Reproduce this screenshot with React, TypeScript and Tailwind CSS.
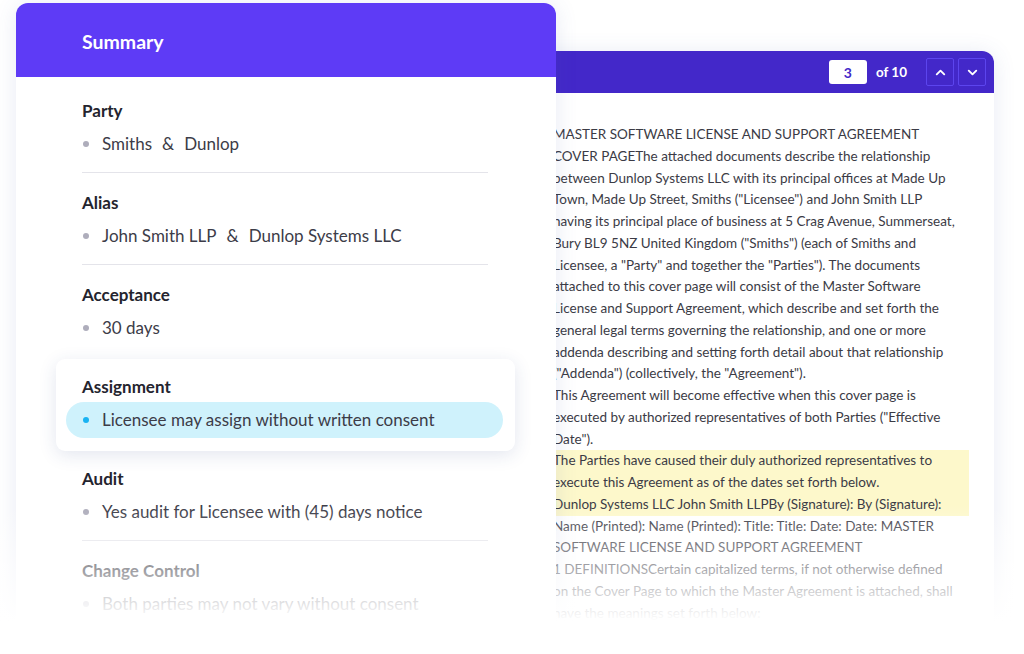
import React from "react";
import { ChevronUp, ChevronDown } from "lucide-react";

const docLines: { text: string; hl?: boolean }[] = [
  { text: "MASTER SOFTWARE LICENSE AND SUPPORT AGREEMENT" },
  { text: "COVER PAGEThe attached documents describe the relationship" },
  { text: "between Dunlop Systems LLC with its principal offices at Made Up" },
  { text: 'Town, Made Up Street, Smiths ("Licensee") and John Smith LLP' },
  { text: "having its principal place of business at 5 Crag Avenue, Summerseat," },
  { text: 'Bury BL9 5NZ United Kingdom ("Smiths") (each of Smiths and' },
  { text: 'Licensee, a "Party" and together the "Parties"). The documents' },
  { text: "attached to this cover page will consist of the Master Software" },
  { text: "License and Support Agreement, which describe and set forth the" },
  { text: "general legal terms governing the relationship, and one or more" },
  { text: "addenda describing and setting forth detail about that relationship" },
  { text: '("Addenda") (collectively, the "Agreement").' },
  { text: "This Agreement will become effective when this cover page is" },
  { text: 'executed by authorized representatives of both Parties ("Effective' },
  { text: 'Date").' },
  { text: "The Parties have caused their duly authorized representatives to", hl: true },
  { text: "execute this Agreement as of the dates set forth below.", hl: true },
  { text: "Dunlop Systems LLC John Smith LLPBy (Signature): By (Signature):", hl: true },
  { text: "Name (Printed): Name (Printed): Title: Title: Date: Date: MASTER" },
  { text: "SOFTWARE LICENSE AND SUPPORT AGREEMENT" },
  { text: "1 DEFINITIONSCertain capitalized terms, if not otherwise defined" },
  { text: "on the Cover Page to which the Master Agreement is attached, shall" },
  { text: "have the meanings set forth below:" },
];

function Item({ children, active }: { children: React.ReactNode; active?: boolean }) {
  return (
    <div className="flex items-center gap-[13px]">
      <span
        className={
          active
            ? "ml-[1px] h-[6px] w-[6px] rounded-full bg-[#19b3f2]"
            : "ml-[1px] h-[6px] w-[6px] rounded-full bg-[#aeadbb]"
        }
      />
      <span className="text-[17px] leading-[24px] text-[#3c3c48]">{children}</span>
    </div>
  );
}

function Amp() {
  return <span className="mx-[10px]">&amp;</span>;
}

function Section({
  title,
  children,
  divider = true,
}: {
  title: string;
  children: React.ReactNode;
  divider?: boolean;
}) {
  return (
    <div className="w-[406px]">
      <div className="text-[17px] font-bold leading-[24px] text-[#24242e]">{title}</div>
      <div className="mt-[9px]">{children}</div>
      {divider && <div className="mt-[16px] mb-[18px] h-px bg-[#e4e4ea]" />}
    </div>
  );
}

export default function App() {
  return (
    <div className="relative h-[654px] w-[1024px] overflow-hidden bg-white font-['Lato','Open_Sans',sans-serif]">
      <div className="flex items-start pl-4 pt-[3px]">
        {/* Summary panel */}
        <section className="relative z-10 h-[640px] w-[540px] shrink-0 rounded-t-[12px] bg-white shadow-[0_2px_22px_rgba(70,90,170,0.13)]">
          <header className="flex h-[74px] items-center rounded-t-[12px] bg-[#5e3bf6] pl-[66px] pt-[4px]">
            <h1 className="text-[19.5px] font-bold text-white">Summary</h1>
          </header>
          <div className="pl-[66px] pt-[22px]">
            <Section title="Party">
              <Item>
                Smiths<Amp />Dunlop
              </Item>
            </Section>
            <Section title="Alias">
              <Item>
                John Smith LLP<Amp />Dunlop Systems LLC
              </Item>
            </Section>
            <Section title="Acceptance" divider={false}>
              <Item>30 days</Item>
            </Section>
            <div className="-ml-[26px] mt-[19px] mb-[16px] w-[459px] rounded-[9px] bg-white pt-[16px] pb-[13px] pl-[26px] shadow-[0_4px_18px_rgba(40,60,130,0.13)]">
              <div className="text-[17px] font-bold leading-[24px] text-[#24242e]">Assignment</div>
              <div className="-ml-[16px] mt-[3px] flex h-[36px] w-[437px] items-center rounded-full bg-[#cff2fc] pl-[16px]">
                <Item active>Licensee may assign without written consent</Item>
              </div>
            </div>
            <Section title="Audit">
              <Item>Yes audit for Licensee with (45) days notice</Item>
            </Section>
            <Section title="Change Control" divider={false}>
              <Item>Both parties may not vary without consent</Item>
            </Section>
          </div>
        </section>

        {/* Document panel */}
        <section className="-ml-[36px] mt-[48px] h-[600px] w-[474px] shrink-0 rounded-tr-[12px] bg-white shadow-[0_2px_22px_rgba(70,90,170,0.13)]">
          <header className="flex h-[42px] items-center justify-end rounded-tr-[12px] bg-[#4328c9] pr-[8px]">
            <div className="flex h-[24px] w-[38px] items-center justify-center rounded-[3px] bg-white text-[14px] font-bold text-[#4328c9]">
              3
            </div>
            <span className="ml-[9px] mr-[19px] text-[13.5px] font-bold text-white">of 10</span>
            <div className="flex gap-[4px]">
              <button className="flex h-[28px] w-[28px] items-center justify-center rounded-[2px] border-[1.5px] border-[#5c45ee] text-white">
                <ChevronUp size={15} strokeWidth={3} />
              </button>
              <button className="flex h-[28px] w-[28px] items-center justify-center rounded-[2px] border-[1.5px] border-[#5c45ee] text-white">
                <ChevronDown size={15} strokeWidth={3} />
              </button>
            </div>
          </header>
          <div className="pl-[33px] pr-[25px] pt-[31px] text-[13.5px] leading-[21.75px] text-[#3b3b45]">
            {docLines.map((l, i) => (
              <div key={i} className={l.hl ? "whitespace-nowrap bg-[#fdf8cb]" : "whitespace-nowrap"}>
                {l.text}
              </div>
            ))}
          </div>
        </section>
      </div>

      {/* bottom fade */}
      <div className="pointer-events-none absolute inset-x-0 top-[505px] bottom-0 z-20 bg-linear-to-b from-white/0 from-0% to-white to-78%" />
    </div>
  );
}
